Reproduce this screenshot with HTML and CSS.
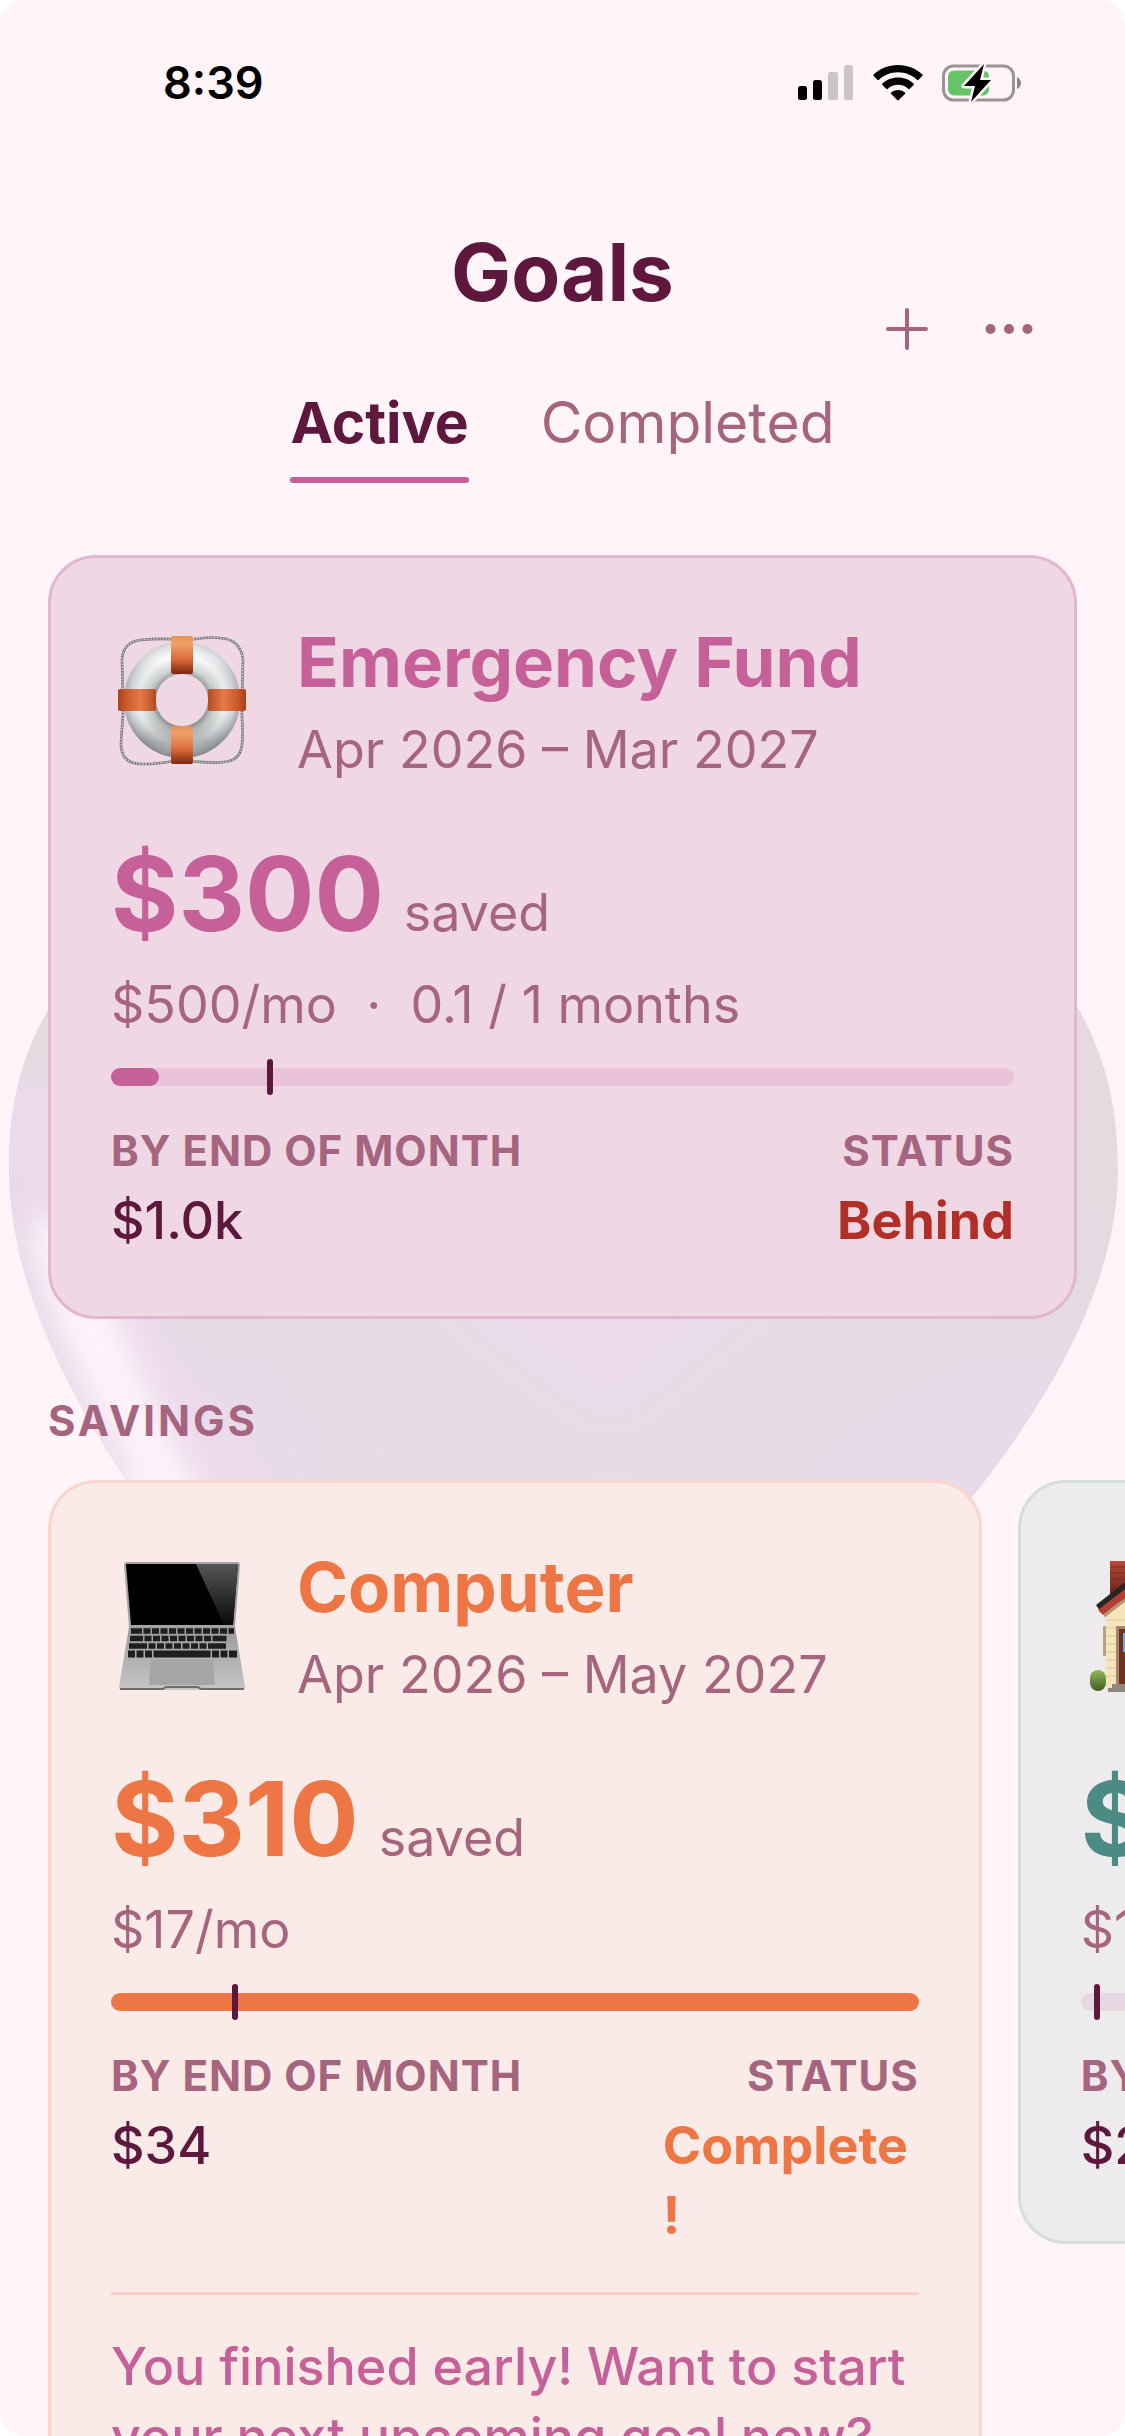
FILE: index.html
```html
<!DOCTYPE html>
<html lang="en">
<head>
<meta charset="UTF-8">
<meta name="viewport" content="width=device-width, initial-scale=1.0">
<title>Goals</title>
<link rel="stylesheet" href="styles.css">
</head>
<body>

<div class="app">
    <!-- heart behind the cards -->
    <svg class="heart" viewBox="0 0 1125 1100" aria-hidden="true">
        <defs>
            <linearGradient id="heartBase" x1="0" y1="0" x2="0" y2="1">
                <stop offset="0" stop-color="#e4dadf"/>
                <stop offset="0.36" stop-color="#e4dae1"/>
                <stop offset="0.48" stop-color="#e9daea"/>
                <stop offset="1" stop-color="#ebdaea"/>
            </linearGradient>
            <filter id="soft" x="-50%" y="-50%" width="200%" height="200%"><feGaussianBlur stdDeviation="16"/></filter>
            <filter id="softer" x="-50%" y="-50%" width="200%" height="200%"><feGaussianBlur stdDeviation="26"/></filter>
            <clipPath id="heartClip">
                <path d="M562 130 C430 -20 130 -20 48 110 C20 158 9 210 9 265 C9 365 50 465 126 580 C230 740 420 890 562 1000 C700 890 860 740 970 600 C1070 475 1118 365 1118 270 C1118 205 1105 155 1077 106 C990 -20 700 -20 562 130 Z"/>
            </clipPath>
        </defs>
        <g clip-path="url(#heartClip)">
            <rect width="1125" height="1100" fill="url(#heartBase)"/>
            <path d="M270 350 H1000 L960 440 L860 520 L760 640 H340 Z" fill="#e7dce4" filter="url(#softer)"/>
            <path d="M410 370 H790 L610 520 Z" fill="#ebdaec" filter="url(#softer)"/>
            <path d="M30 180 Q60 400 220 620" fill="none" stroke="#ecdaec" stroke-width="110" filter="url(#soft)"/>
            <path d="M50 320 Q90 470 190 640" fill="none" stroke="#fff4fb" stroke-width="64" filter="url(#soft)"/>
            <path d="M6 265 C9 365 50 465 126 580" fill="none" stroke="#e8d8e8" stroke-width="18" filter="url(#soft)"/>
        </g>
    </svg>

    <div class="statusBar">
        <span class="time">8:39</span>
        <div class="statusIcons">
            <svg width="56" height="36" viewBox="0 0 56 36" aria-hidden="true">
                <rect x="0" y="21" width="9" height="14" rx="2.5"/>
                <rect x="15" y="15" width="9" height="20" rx="2.5"/>
                <rect x="30" y="7" width="10" height="28" rx="2.5" fill="#cbc4c8"/>
                <rect x="46" y="0" width="9" height="35" rx="2.5" fill="#cbc4c8"/>
            </svg>
            <svg width="50" height="36" viewBox="0 0 50 36" aria-hidden="true">
                <path d="M25 0 C34.500 0 43 3.500 49.300 9.500 Q50 10.300 49.300 11 L45.500 14.800 Q44.800 15.500 44 14.800 C39 10 32 7.300 25 7.300 C18 7.300 11 10 6 14.800 Q5.200 15.500 4.500 14.800 L.7 11 Q0 10.300 .7 9.500 C7 3.500 15.500 0 25 0 Z"/>
                <path d="M25 12.500 C31 12.500 36.600 14.800 40.600 18.500 Q41.400 19.300 40.600 20 L36.800 23.700 Q36 24.400 35.200 23.700 C32.500 21.300 29 19.700 25 19.700 C21 19.700 17.500 21.300 14.800 23.700 Q14 24.400 13.200 23.700 L9.400 20 Q8.600 19.300 9.400 18.500 C13.400 14.800 19 12.500 25 12.500 Z"/>
                <path d="M25 25 C27.600 25 30 25.900 31.900 27.400 Q32.700 28.100 31.900 28.900 L25.800 35 Q25 35.800 24.200 35 L18.100 28.900 Q17.300 28.100 18.100 27.400 C20 25.900 22.400 25 25 25 Z"/>
            </svg>
            <svg width="80" height="38" viewBox="0 0 80 38" aria-hidden="true">
                <rect x="1.500" y="2" width="70" height="34" rx="10" fill="none" stroke="#9b9497" stroke-width="3"/>
                <path d="M75 13 Q79 15 79 19 Q79 23 75 25 Z" fill="#8b8588"/>
                <rect x="6" y="6.500" width="41" height="25" rx="6" fill="#65c466"/>
                <path d="M42 0 L22 22 H33 L29 38 L49 16 H38 Z" fill="#000" stroke="#fff4f8" stroke-width="5" stroke-linejoin="round" paint-order="stroke"/>
            </svg>
        </div>
    </div>

    <header class="header">
        <h1>Goals</h1>
        <div class="actions">
            <button type="button" aria-label="Add goal">
                <svg width="42" height="42" viewBox="0 0 42 42"><path d="M21 2 V40 M2 21 H40" stroke="currentColor" stroke-width="4" stroke-linecap="round"/></svg>
            </button>
            <button type="button" aria-label="More">
                <svg width="48" height="12" viewBox="0 0 48 12"><g fill="currentColor"><circle cx="5.500" cy="6" r="5"/><circle cx="24" cy="6" r="5"/><circle cx="42.500" cy="6" r="5"/></g></svg>
            </button>
        </div>
    </header>

    <nav class="tabs">
        <button type="button" class="tab active">Active</button>
        <button type="button" class="tab">Completed</button>
    </nav>

    <main>
        <article class="card pink">
            <div class="cardHead">
                <svg class="emoji" viewBox="0 0 128 132" role="img" aria-label="Ring buoy">
                    <defs>
                        <radialGradient id="ring" cx="64" cy="65" r="59" gradientUnits="userSpaceOnUse">
                            <stop offset="0.44" stop-color="#8f9292"/>
                            <stop offset="0.54" stop-color="#c9cdce"/>
                            <stop offset="0.74" stop-color="#f4f7f9"/>
                            <stop offset="0.88" stop-color="#d3d8dc"/>
                            <stop offset="1" stop-color="#a3a7a9"/>
                        </radialGradient>
                        <linearGradient id="ringShade" x1="0" y1="0" x2="0" y2="1">
                            <stop offset="0" stop-color="#fff" stop-opacity="0.45"/>
                            <stop offset="0.6" stop-color="#888" stop-opacity="0"/>
                            <stop offset="1" stop-color="#555" stop-opacity="0.4"/>
                        </linearGradient>
                        <linearGradient id="bandV" x1="0" y1="0" x2="0" y2="1">
                            <stop offset="0" stop-color="#e88f55"/>
                            <stop offset="0.2" stop-color="#f0a268"/>
                            <stop offset="0.6" stop-color="#dd6c3c"/>
                            <stop offset="1" stop-color="#7d280e"/>
                        </linearGradient>
                        <linearGradient id="bandH" x1="0" y1="0" x2="1" y2="0">
                            <stop offset="0" stop-color="#a94218"/>
                            <stop offset="0.25" stop-color="#cd5c2f"/>
                            <stop offset="0.6" stop-color="#e47a49"/>
                            <stop offset="1" stop-color="#b54a20"/>
                        </linearGradient>
                    </defs>
                    <path d="M64 5 C48 3 32 4 22 5 Q4 8 4 26 L5 62 C6 84 3 96 3 112 Q5 130 26 129 C42 129 50 126 64 126 C80 126 92 129 106 127 Q122 126 124 110 C126 96 123 84 124 66 L125 24 Q122 4 102 3 C88 1 78 5 64 5 Z" fill="none" stroke="#77787a" stroke-width="2.600"/>
                    <path d="M64 5 C48 3 32 4 22 5 Q4 8 4 26 L5 62 C6 84 3 96 3 112 Q5 130 26 129 C42 129 50 126 64 126 C80 126 92 129 106 127 Q122 126 124 110 C126 96 123 84 124 66 L125 24 Q122 4 102 3 C88 1 78 5 64 5 Z" fill="none" stroke="#d8d8d8" stroke-width="1.400" stroke-dasharray="1.500 1.500"/>
                    <circle cx="64" cy="65" r="42" fill="none" stroke="url(#ring)" stroke-width="32"/>
                    <circle cx="64" cy="65" r="42" fill="none" stroke="url(#ringShade)" stroke-width="32"/>
                    <rect x="53" y="1" width="22" height="38" rx="2" fill="url(#bandV)"/>
                    <rect x="53" y="91" width="22" height="38" rx="2" fill="url(#bandV)"/>
                    <rect x="0" y="54" width="38" height="22" rx="2" fill="url(#bandH)"/>
                    <rect x="90" y="54" width="38" height="22" rx="2" fill="url(#bandH)" transform="rotate(180 109 65)"/>
                </svg>
                <div>
                    <h2>Emergency Fund</h2>
                    <p class="dates">Apr 2026 – Mar 2027</p>
                </div>
            </div>
            <p class="amount"><strong>$300</strong> <span>saved</span></p>
            <p class="rate">$500/mo &nbsp;·&nbsp; 0.1 / 1 months</p>
            <div class="progress">
                <div class="fill" style="width: 5.3%"></div>
                <div class="marker" style="left: 17.3%"></div>
            </div>
            <div class="stats">
                <div>
                    <h3>BY END OF MONTH</h3>
                    <p class="value">$1.0k</p>
                </div>
                <div class="status">
                    <h3>STATUS</h3>
                    <p class="value behind">Behind</p>
                </div>
            </div>
        </article>

        <h3 class="sectionTitle">SAVINGS</h3>

        <div class="carousel">
            <article class="card orange">
                <div class="cardHead">
                    <svg class="emoji" viewBox="0 0 128 132" role="img" aria-label="Laptop">
                        <defs>
                            <linearGradient id="glare" x1="0" y1="0" x2="0" y2="1">
                                <stop offset="0" stop-color="#565656"/>
                                <stop offset="1" stop-color="#0a0a0a"/>
                            </linearGradient>
                            <linearGradient id="metal" x1="0" y1="0" x2="0" y2="1">
                                <stop offset="0" stop-color="#999"/>
                                <stop offset="1" stop-color="#c6c6c6"/>
                            </linearGradient>
                        </defs>
                        <path d="M9 2 H119 Q122 2 122 5 L117 67 H11 L6 5 Q6 2 9 2 Z" fill="#a5a5a5"/>
                        <path d="M8 4 H120 L115 65 H13 Z" fill="#000"/>
                        <path d="M78 4 H120 L115 65 H106 Z" fill="url(#glare)"/>
                        <path d="M11 67 H117 L127 127 Q127 130 124 130 H4 Q1 130 1 127 Z" fill="url(#metal)"/>
                        <g stroke="#1e1e1e" stroke-width="5.500">
                            <path d="M13 71 H116" stroke-dasharray="11 1.500 7 1.500 7 1.500 7 1.500 7 1.500 7 1.500 7 1.500 7 1.500 7 1.500 7 1.500 7 1.500"/>
                            <path d="M12 78.500 H117" stroke-dasharray="13 1.500 7 1.500 7 1.500 7 1.500 7 1.500 7 1.500 7 1.500 7 1.500 7 1.500 14"/>
                            <path d="M11 86 H118" stroke-dasharray="18 1.500 7 1.500 7 1.500 7 1.500 7 1.500 7 1.500 7 1.500 7 1.500 18"/>
                            <path d="M10 94 H119" stroke-width="7" stroke-dasharray="7 1.500 7 1.500 7 1.500 57 1.500 7 1.500 7 1.500 8"/>
                        </g>
                        <path d="M33 99 H95 L97 125 H31 Z" fill="#a5a5a5"/>
                        <path d="M2 129 H45 L48 127 H80 L83 129 H126" fill="none" stroke="#6c6c6c" stroke-width="2"/>
                    </svg>
                    <div>
                        <h2>Computer</h2>
                        <p class="dates">Apr 2026 – May 2027</p>
                    </div>
                </div>
                <p class="amount"><strong>$310</strong> <span>saved</span></p>
                <p class="rate">$17/mo</p>
                <div class="progress">
                    <div class="fill" style="width: 100%"></div>
                    <div class="marker" style="left: 15%"></div>
                </div>
                <div class="stats">
                    <div>
                        <h3>BY END OF MONTH</h3>
                        <p class="value">$34</p>
                    </div>
                    <div class="status">
                        <h3>STATUS</h3>
                        <p class="value complete">Complete<wbr>!</p>
                    </div>
                </div>
                <p class="message">You finished early! Want to start your next upcoming goal now?</p>
            </article>

            <article class="card teal">
                <div class="cardHead">
                    <svg class="emoji" viewBox="0 0 128 132" role="img" aria-label="House">
                        <defs>
                            <linearGradient id="bush" x1="0" y1="0" x2="0" y2="1">
                                <stop offset="0" stop-color="#93b95c"/>
                                <stop offset="1" stop-color="#3f5f24"/>
                            </linearGradient>
                            <linearGradient id="chimney" x1="0" y1="0" x2="0" y2="1">
                                <stop offset="0" stop-color="#b94a38"/>
                                <stop offset="1" stop-color="#5a1c17"/>
                            </linearGradient>
                        </defs>
                        <rect x="22" y="1" width="20" height="40" fill="url(#chimney)"/>
                        <path d="M22 7 H42 M22 13 H42 M22 19 H42" stroke="#7e2b22" stroke-width="1"/>
                        <path d="M15 66 h6 v30 h-6 Z" fill="#b9a184"/>
                        <path d="M18 54 L64 18 L120 54 V130 H18 Z" fill="#f5e5bd"/>
                        <path d="M18 60 H120 M18 68 H120 M18 76 H120 M18 84 H120 M18 92 H120 M18 100 H120 M18 108 H120 M18 116 H120" stroke="#dccaa0" stroke-width="1"/>
                        <path d="M8 45 L64 1 L124 45 L120 52 L64 12 L12 51 Z" fill="#262626"/>
                        <path d="M10 50 L64 8 L121 52 L116 58 L64 17 L15 55 Z" fill="#b73d30"/>
                        <path d="M16 56 L64 19 L112 57" fill="none" stroke="#b09474" stroke-width="3"/>
                        <rect x="28" y="66" width="36" height="60" fill="#a28667"/>
                        <rect x="31" y="69" width="30" height="56" fill="#6d3321"/>
                        <rect x="35" y="73" width="22" height="19" fill="#69aee0"/>
                        <path d="M20 132 V128 H24 V124 H66 V132 H20 Z" fill="#8e877d"/>
                        <rect x="2" y="110" width="16" height="21" rx="8" fill="url(#bush)"/>
                    </svg>
                    <div>
                        <h2>House</h2>
                        <p class="dates">Apr 2026 – May 2031</p>
                    </div>
                </div>
                <p class="amount"><strong>$0</strong> <span>saved</span></p>
                <p class="rate">$100/mo</p>
                <div class="progress">
                    <div class="marker" style="left: 1.6%"></div>
                </div>
                <div class="stats">
                    <div>
                        <h3>BY END OF MONTH</h3>
                        <p class="value">$200</p>
                    </div>
                    <div class="status">
                        <h3>STATUS</h3>
                        <p class="value behind">Behind</p>
                    </div>
                </div>
            </article>
        </div>
    </main>
</div>

</body>
</html>
```
FILE: styles.css
```css
html {
    background: #fff;
}

body {
    margin: 0;
    font-family: Inter, sans-serif;
    color: #5e173d;
}

h1, h2, h3, p {
    margin: 0;
}

button {
    border: 0;
    padding: 0;
    background: none;
    font: inherit;
    color: inherit;
    cursor: pointer;
}

.app {
    position: relative;
    height: 100vh;
    overflow: hidden;
    background: #fff4f8;
    border-radius: 24px;
}

/* decoration under the content */
.heart {
    position: absolute;
    left: 0;
    top: 900px;
    width: 100%;
}

.statusBar,
.header,
.tabs,
main {
    position: relative;
}

.statusBar {
    display: flex;
    justify-content: space-between;
    align-items: center;
    height: 165px;
    padding: 0 103px 0 163px;
    box-sizing: border-box;
}

.time {
    font-size: 45px;
    font-weight: 600;
    color: #000;
}

.statusIcons {
    display: flex;
    align-items: center;
    gap: 19px;
}

.header {
    display: grid;
    grid-template-columns: 1fr auto 1fr;
    height: 154px;
    margin-top: 50px;
    padding: 0 76px;
}

.header h1 {
    grid-column: 2;
    font-size: 80px;
    line-height: 114px;
}

.actions {
    display: flex;
    justify-content: flex-end;
    align-self: end;
    gap: 22px;
    color: #a5657f;
}

.actions button {
    display: flex;
    justify-content: center;
    align-items: center;
    width: 80px;
    height: 80px;
}

.tabs {
    display: flex;
    justify-content: center;
    gap: 72px;
    margin-top: 14px;
}

.tab {
    display: flex;
    flex-direction: column;
    font-size: 57px;
    line-height: 80px;
    color: #a5657f;
}

.tab::after {
    content: "";
    height: 6px;
    margin-top: 14px;
    border-radius: 3px;
}

.tab.active {
    font-weight: bold;
    color: #5e173d;
}

.tab.active::after {
    background: #c56098;
}

main {
    padding: 72px 48px 0;
}

.card {
    box-sizing: border-box;
    padding: 60px;
    border: 3px solid;
    border-radius: 48px;
}

.card.pink {
    --accent: #c56098;
    --track: #eac3db;
    background: #f0d7e4;
    border-color: #e2b5d1;
}

.card.orange {
    --accent: #ee7644;
    --track: #f9d8cf;
    background: #fbebe8;
    border-color: #f9d5cb;
}

.card.teal {
    --accent: #4b8b84;
    --track: #e7d7e1;
    background: #eeebee;
    border-color: #d3dedf;
}

.cardHead {
    display: flex;
    gap: 51px;
}

.emoji {
    flex: none;
    width: 128px;
    height: 132px;
    margin: 17px 0 0 7px;
}

.card h2 {
    font-size: 69px;
    line-height: 88px;
    color: var(--accent);
    white-space: nowrap;
}

.dates,
.rate,
.amount span {
    font-size: 52px;
    line-height: 68px;
    color: #a5657f;
    white-space: nowrap;
}

.dates {
    margin-top: 10px;
}

.amount {
    display: flex;
    align-items: baseline;
    gap: 20px;
    margin-top: 38px;
}

.amount strong {
    font-size: 103px;
    line-height: 144px;
    color: var(--accent);
}

.rate {
    margin-top: 5px;
}

.progress {
    position: relative;
    height: 18px;
    margin-top: 29px;
    border-radius: 9px;
    background: var(--track);
}

.fill {
    height: 100%;
    border-radius: 9px;
    background: var(--accent);
}

.marker {
    position: absolute;
    top: -9px;
    width: 6px;
    height: 36px;
    border-radius: 3px;
    background: #5e173d;
}

.stats {
    display: flex;
    justify-content: space-between;
    margin-top: 38px;
}

h3 {
    font-size: 42px;
    font-weight: bold;
    line-height: 54px;
    letter-spacing: 1px;
    color: #a5657f;
    white-space: nowrap;
}

.value {
    margin-top: 8px;
    font-size: 52px;
    font-weight: 500;
    line-height: 70px;
}

.status {
    display: flex;
    flex-direction: column;
    align-items: flex-end;
}

.behind {
    font-weight: bold;
    color: #b03028;
}

.complete {
    max-width: 256px;
    font-weight: bold;
    color: var(--accent);
}

.sectionTitle {
    margin: 75px 0 32px;
    letter-spacing: 3px;
}

.carousel {
    display: flex;
    align-items: flex-start;
    gap: 36px;
}

.carousel .card {
    flex: 0 0 83vw;
}

.message {
    margin-top: 41px;
    padding-top: 37px;
    border-top: 3px solid #f9d0c6;
    font-size: 52px;
    font-weight: 500;
    line-height: 70px;
    color: #c56098;
}
```
